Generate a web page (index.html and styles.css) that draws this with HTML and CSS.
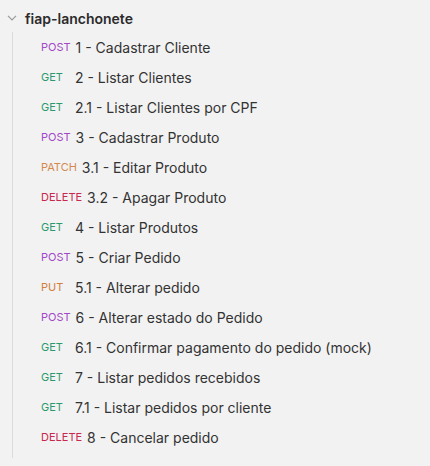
FILE: index.html
```
<!DOCTYPE html>
<html>
<head>
<meta charset="utf-8">
<link rel="stylesheet" href="styles.css">
</head>
<body>
<div class="tree">
  <div class="folder">
    <svg class="chev" width="10" height="6" viewBox="0 0 10 6"><path d="M1 0.8 L5 4.8 L9 0.8" fill="none" stroke="#9a9a9a" stroke-width="1.2"/></svg>
    <span class="folder-name">fiap-lanchonete</span>
  </div>
  <div class="items">
    <div class="item"><span class="m post">POST</span><span class="t">1 - Cadastrar Cliente</span></div>
    <div class="item"><span class="m get">GET</span><span class="t">2 - Listar Clientes</span></div>
    <div class="item"><span class="m get">GET</span><span class="t">2.1 - Listar Clientes por CPF</span></div>
    <div class="item"><span class="m post">POST</span><span class="t">3 - Cadastrar Produto</span></div>
    <div class="item"><span class="m patch">PATCH</span><span class="t">3.1 - Editar Produto</span></div>
    <div class="item"><span class="m delete">DELETE</span><span class="t">3.2 - Apagar Produto</span></div>
    <div class="item"><span class="m get">GET</span><span class="t">4 - Listar Produtos</span></div>
    <div class="item"><span class="m post">POST</span><span class="t">5 - Criar Pedido</span></div>
    <div class="item"><span class="m put">PUT</span><span class="t">5.1 - Alterar pedido</span></div>
    <div class="item"><span class="m post">POST</span><span class="t">6 - Alterar estado do Pedido</span></div>
    <div class="item"><span class="m get">GET</span><span class="t">6.1 - Confirmar pagamento do pedido (mock)</span></div>
    <div class="item"><span class="m get">GET</span><span class="t">7 - Listar pedidos recebidos</span></div>
    <div class="item"><span class="m get">GET</span><span class="t">7.1 - Listar pedidos por cliente</span></div>
    <div class="item"><span class="m delete">DELETE</span><span class="t">8 - Cancelar pedido</span></div>
  </div>
</div>
</body>
</html>
```
FILE: styles.css
```
html, body {
  margin: 0;
  padding: 0;
  background: #f2f2f2;
  font-family: Inter, "Noto Sans", sans-serif;
  color: #333;
}
.tree {
  padding: 4px 0 0 0;
}
.folder {
  display: flex;
  align-items: center;
  height: 28px;
  padding-left: 7px;
}
.chev {
  margin-right: 8px;
}
.folder-name {
  font-weight: 600;
  font-size: 14px;
  color: #2b2b2b;
}
.items {
  margin-left: 12px;
  border-left: 1px solid #dcdcdc;
  padding-bottom: 6px;
}
.item {
  display: flex;
  align-items: center;
  height: 30px;
  padding-left: 28px;
}
.m {
  font-size: 11px;
  min-width: 29px;
  margin-right: 5px;
}
.t {
  font-size: 14px;
  color: #333;
}
.post { color: #a248c8; }
.get { color: #2a9a6e; }
.patch { color: #d38a50; }
.delete { color: #c8284f; }
.put { color: #d0803c; }
```
